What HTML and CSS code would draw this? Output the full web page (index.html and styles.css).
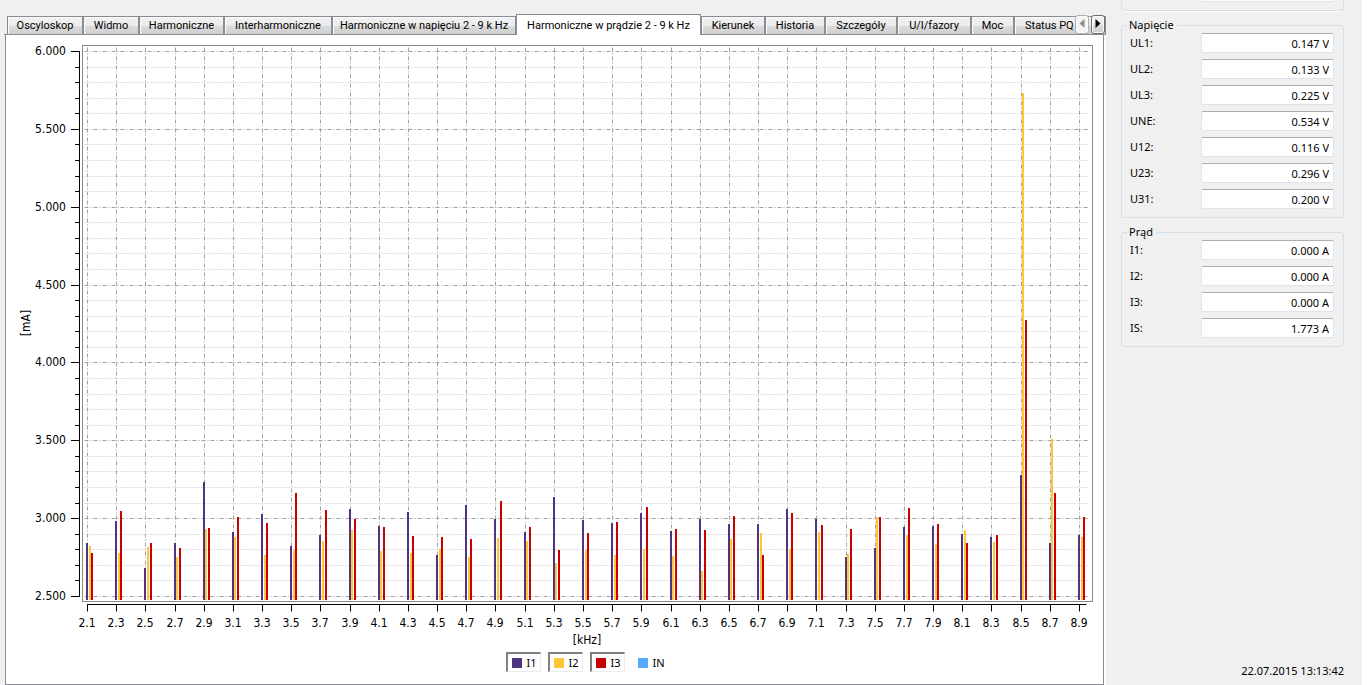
FILE: index.html
```html
<!DOCTYPE html>
<html lang="pl">
<head>
<meta charset="utf-8">
<title>Harmoniczne w prądzie</title>
<link rel="stylesheet" href="styles.css">
</head>
<body>
<div class="app">
  <main class="main">
    <div class="tabbar">
      <div class="tabs" role="tablist">
        <button class="tab w76" role="tab">Oscyloskop</button>
        <button class="tab w56" role="tab">Widmo</button>
        <button class="tab w85" role="tab">Harmoniczne</button>
        <button class="tab w108" role="tab">Interharmoniczne</button>
        <button class="tab w184" role="tab">Harmoniczne w napięciu 2 - 9 k Hz</button>
        <button class="tab w185 selected" role="tab" aria-selected="true">Harmoniczne w prądzie 2 - 9 k Hz</button>
        <button class="tab w64" role="tab">Kierunek</button>
        <button class="tab w60" role="tab">Historia</button>
        <button class="tab w72" role="tab">Szczegóły</button>
        <button class="tab w74" role="tab">U/I/fazory</button>
        <button class="tab w43" role="tab">Moc</button>
        <button class="tab last" role="tab">Status PQ</button>
      </div>
      <div class="scrollers">
        <button class="scroller" disabled aria-label="Wstecz"><svg width="6" height="10" viewBox="0 0 6 10"><path d="M5.500 0V9L0.500 4.500Z" fill="#8f8f8f"/></svg></button>
        <button class="scroller" aria-label="Dalej"><svg width="6" height="10" viewBox="0 0 6 10"><path d="M0.500 0V9L5.500 4.500Z" fill="#000"/></svg></button>
      </div>
    </div>
    <div class="page">
      <section class="panel">
        <div class="plot"><svg id="chart" class="chart" role="img" aria-label="Harmoniczne w prądzie"></svg></div>
        <div class="legend">
          <button class="key on"><span class="swatch i1"></span>I1</button>
          <button class="key on"><span class="swatch i2"></span>I2</button>
          <button class="key on"><span class="swatch i3"></span>I3</button>
          <button class="key"><span class="swatch in"></span>IN</button>
        </div>
      </section>
    </div>
  </main>
  <aside class="side">
    <div class="group cut"><div class="row"><span></span><input class="value" readonly aria-label="Wartość"></div></div>
    <fieldset class="group">
      <legend>Napięcie</legend>
      <div class="row"><label for="ul1">UL1:</label><input class="value" id="ul1" readonly value="0.147 V"></div>
      <div class="row"><label for="ul2">UL2:</label><input class="value" id="ul2" readonly value="0.133 V"></div>
      <div class="row"><label for="ul3">UL3:</label><input class="value" id="ul3" readonly value="0.225 V"></div>
      <div class="row"><label for="une">UNE:</label><input class="value" id="une" readonly value="0.534 V"></div>
      <div class="row"><label for="u12">U12:</label><input class="value" id="u12" readonly value="0.116 V"></div>
      <div class="row"><label for="u23">U23:</label><input class="value" id="u23" readonly value="0.296 V"></div>
      <div class="row"><label for="u31">U31:</label><input class="value" id="u31" readonly value="0.200 V"></div>
    </fieldset>
    <fieldset class="group">
      <legend>Prąd</legend>
      <div class="row"><label for="i1">I1:</label><input class="value" id="i1" readonly value="0.000 A"></div>
      <div class="row"><label for="i2">I2:</label><input class="value" id="i2" readonly value="0.000 A"></div>
      <div class="row"><label for="i3">I3:</label><input class="value" id="i3" readonly value="0.000 A"></div>
      <div class="row"><label for="is">IS:</label><input class="value" id="is" readonly value="1.773 A"></div>
    </fieldset>
    <time class="clock">22.07.2015 13:13:42</time>
  </aside>
</div>
<script src="chart.js"></script>
</body>
</html>
```

FILE: styles.css
```css
* { box-sizing: border-box; }
body {
  margin: 0;
  background: #fff;
  color: #000;
  font: 11px/14px "Noto Sans", "Open Sans", sans-serif;
}
button, input { font: inherit; color: inherit; }
.app {
  display: flex;
  min-height: 100vh;
  margin-right: 7px;
}
.main {
  flex: 1;
  min-width: 0;
  display: flex;
  flex-direction: column;
}

/* Tabs */
.tabbar {
  display: flex;
  height: 35px;
  padding-left: 7px;
  background: #f0f0f0;
  border-bottom: 1px solid #898c95;
  border-image: linear-gradient(to right, #f0f0f0 5px, #898c95 5px) 1;
  position: relative;
  z-index: 1;
}
.tabs {
  flex: 1;
  min-width: 0;
  display: flex;
  align-items: flex-end;
  overflow: hidden;
  margin-bottom: -1px;
  padding-bottom: 1px;
}
.tab {
  flex: none;
  height: 18px;
  padding: 0;
  border: 1px solid #898c95;
  border-bottom: 0;
  background: linear-gradient(#f2f2f2 0, #ebebeb 50%, #dcdcdc 51%, #cfcfcf 100%);
  box-shadow: inset 1px 1px #fbfbfb;
  font-family: Roboto, "Noto Sans", sans-serif;
  line-height: 17px;
  white-space: nowrap;
}
.tab.selected {
  height: 21px;
  margin-bottom: -1px;
  background: #fff;
  box-shadow: none;
  line-height: 19px;
}
.tab.last { flex: 1 0 92px; padding-left: 10px; text-align: left; }
.w43 { width: 43px; }
.w56 { width: 56px; }
.w60 { width: 60px; }
.w64 { width: 64px; }
.w72 { width: 72px; }
.w74 { width: 74px; }
.w76 { width: 76px; }
.w85 { width: 85px; }
.w108 { width: 108px; }
.w184 { width: 184px; }
.w185 { width: 185px; }
.scrollers {
  position: absolute;
  right: 1px;
  top: 15px;
  display: flex;
  gap: 2px;
}
.scroller {
  width: 14px;
  height: 19px;
  padding: 0 0 1px;
  display: flex;
  align-items: center;
  justify-content: center;
  border: 1px solid #707070;
  border-radius: 3px;
  background: linear-gradient(#f2f2f2 0, #ebebeb 50%, #dddddd 51%, #cfcfcf 100%);
  box-shadow: inset 0 0 0 1px #fafafa;
}
.scroller:disabled { border-color: #adb2b5; background: #f4f4f4; }

/* Chart page */
.page {
  flex: 1;
  display: flex;
  padding-right: 2px;
  border-left: 5px solid #f0f0f0;
}
.panel {
  flex: 1;
  min-width: 0;
  display: flex;
  flex-direction: column;
  border: 1px solid #898c95;
  border-top: 0;
  padding-bottom: 12px;
}
.plot { flex: 1; min-height: 300px; display: flex; }
.chart {
  flex: 1;
  min-width: 0;
  width: 100%;
  height: auto;
  font-family: "DejaVu Sans Condensed", "Noto Sans", sans-serif;
  font-size: 12px;
}
.frame { fill: none; stroke: #828790; }
.axis { stroke: #000; }
.grid-major { stroke: #a0a0a0; stroke-dasharray: 4 2 1 2; }
.grid-minor { stroke: #c0c0c0; stroke-dasharray: 1 2; }
.end { text-anchor: end; }
.middle { text-anchor: middle; }
.i1 { fill: #503480; background: #503480; }
.i2 { fill: #ffc637; background: #ffc637; }
.i3 { fill: #c80000; background: #c80000; }
.in { background: #55aaff; }

.legend {
  display: flex;
  justify-content: center;
  gap: 7px;
  padding-left: 63px;
}
.key {
  display: flex;
  align-items: center;
  gap: 5px;
  width: 35px;
  height: 20px;
  padding: 0 0 0 4px;
  border: 2px solid transparent;
  border-width: 2px 1px 1px 2px;
  background: #fff;
}
.key.on { border-color: #808080 #ececec #ececec #808080; }
.swatch { flex: none; width: 10px; height: 10px; }

/* Readings */
.side {
  width: 256px;
  padding: 0 18px 7px 15px;
  display: flex;
  flex-direction: column;
  background: #f0f0f0;
}
.group {
  margin: 0 0 7px;
  padding: 1px 9px 8px 8px;
  border: 1px solid #d5dfe5;
  border-radius: 3px;
  box-shadow: 0 1px #fff;
  min-width: 0;
  display: block;
}
.group legend { margin-left: -3px; padding: 0 3px 0 2px; }
.group.cut {
  height: 11px;
  border-top: 0;
  display: flex;
  flex-direction: column;
  justify-content: flex-end;
  overflow: hidden;
}
fieldset.group { box-shadow: none; }
.row {
  display: flex;
  justify-content: space-between;
  align-items: center;
}
.row + .row { margin-top: 6px; }
.value {
  width: 133px;
  height: 20px;
  padding: 0 4px 0 3px;
  border: 1px solid #e2e3ea;
  border-top-color: #abadb3;
  border-radius: 2px;
  background: #fff;
  text-align: right;
  outline: 0;
}
.clock { margin-top: auto; text-align: right; }
```

FILE: chart.js
```js
const NS = "http://www.w3.org/2000/svg";
const svg = document.getElementById("chart");

// Bar heights of I1, I2, I3 per frequency, in 1/549 of the plot height
const BARS = [
  [57,54,47],[79,47,89],[32,53,57],[57,43,52],[118,71,72],[68,63,83],[86,45,77],
  [54,50,107],[65,59,90],[91,70,81],[74,49,73],[88,47,64],[45,51,63],[95,43,61],
  [81,62,99],[68,59,73],[103,37,50],[80,50,67],[77,45,78],[87,51,93],[69,44,71],
  [81,29,70],[76,61,84],[76,67,45],[91,51,87],[81,68,75],[43,46,71],[52,83,83],
  [73,65,92],[74,56,76],[66,70,57],[63,58,65],[125,507,280],[57,161,107],[65,63,83]
];
const SERIES = ["i1", "i2", "i3"];
const BAR_STEP = 2.6;

function add(name, attrs, text) {
  const el = document.createElementNS(NS, name);
  for (const key in attrs) el.setAttribute(key, attrs[key]);
  if (text) el.textContent = text;
  svg.appendChild(el);
  return el;
}

function line(cls, x1, y1, x2, y2) {
  add("path", { class: cls, d: `M${x1} ${y1}L${x2} ${y2}` });
}

function draw() {
  svg.replaceChildren();
  const box = svg.getBoundingClientRect();
  const left = 76.5, top = 10.5;
  const right = Math.round(box.width) - 10.5;
  const bottom = Math.round(box.height) - 50.5;
  const x0 = left + 5, xStep = (right - left - 18) / 34;
  const y6 = top + 6, y25 = bottom - 5;
  const unit = (y25 - y6) / 35;
  const snap = v => Math.floor(v) + 0.5;

  for (let i = 0; i <= 35; i++) {
    const y = snap(y25 - i * unit);
    const major = i % 5 === 0;
    line(major ? "grid-major" : "grid-minor", left + 2, y, right - 3, y);
    line("axis", major ? 65 : 69, y, 74, y);
    if (major) add("text", { class: "end", x: 60, y: Math.floor(y) + 4 }, (2.5 + i / 10).toFixed(3));
  }
  line("axis", 73.5, y6 - 0.5, 73.5, y25 + 0.5);

  BARS.forEach((bar, i) => {
    const x = snap(x0 + i * xStep);
    line("grid-major", x, top + 2, x, bottom - 2);
    line("axis", x, bottom + 3, x, bottom + 10);
    add("text", { class: "middle", x: Math.floor(x), y: Math.floor(bottom) + 26 }, (2.1 + i * 0.2).toFixed(1));
  });
  line("axis", x0 - 0.5, bottom + 3, right - 6, bottom + 3);

  const base = bottom - 1.5, scale = (bottom - top - 7) / 549;
  BARS.forEach((bar, i) => bar.forEach((h, s) => {
    const height = Math.round(h * scale);
    const x = Math.round(x0 - 1.5 + i * xStep + s * BAR_STEP);
    add("rect", { class: SERIES[s], x: x, y: base - height, width: 2, height: height });
  }));

  add("rect", { class: "frame", x: left, y: top, width: right - left, height: bottom - top });
  const cx = Math.floor((left + right) / 2), cy = Math.floor((top + bottom) / 2);
  add("text", { class: "middle", x: cx, y: Math.floor(bottom) + 43 }, "[kHz]");
  add("text", { class: "middle", transform: `translate(24 ${cy}) rotate(-90)` }, "[mA]");
}

draw();
window.addEventListener("resize", draw);
```
